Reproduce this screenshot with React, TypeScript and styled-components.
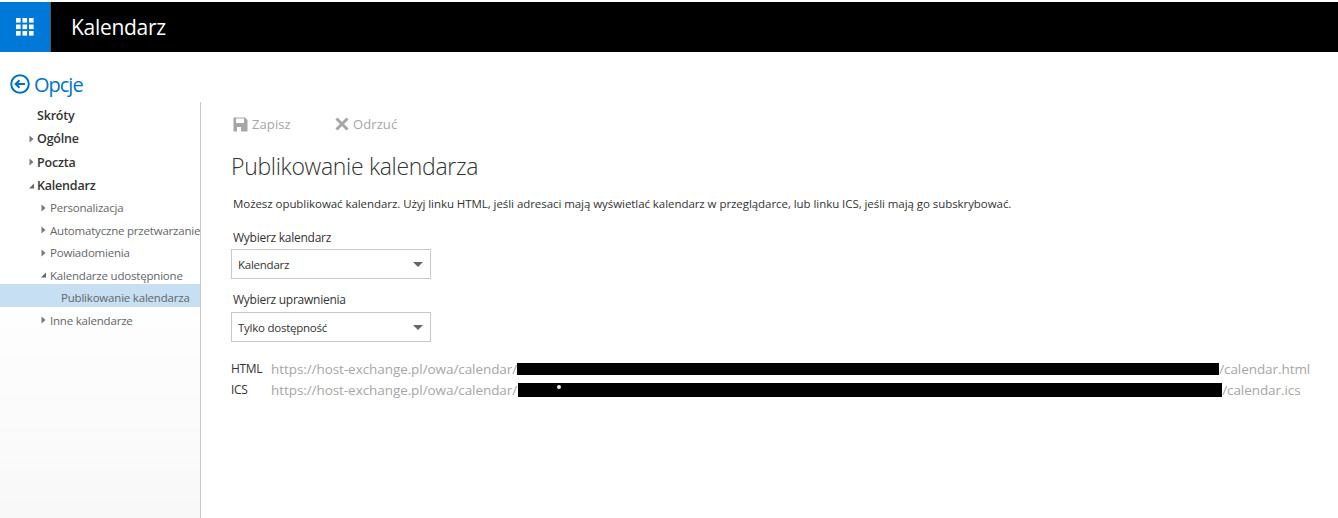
import React from "react";
import styled, { createGlobalStyle } from "styled-components";

const Global = createGlobalStyle`
  html, body { margin: 0; padding: 0; background: #fff; }
  body { font-family: "Open Sans", "Noto Sans", "Liberation Sans", sans-serif; overflow: hidden; }
`;

const Page = styled.div`
  width: 1338px; height: 518px; display: flex; flex-direction: column; overflow: hidden; background: #fff;
`;
const Header = styled.header`
  margin-top: 2px; height: 50px; flex: none; background: #000; display: flex; align-items: center;
`;
const Tile = styled.div`
  width: 50px; height: 50px; background: #0078d7; border-right: 1px solid #555; display: flex; align-items: center; justify-content: center;
`;
const AppTitle = styled.div`
  margin-left: 20px; color: #fff; font-size: 21px; letter-spacing: -0.3px; line-height: 50px;
`;
const BackRow = styled.div`
  height: 50px; flex: none; display: flex; align-items: center; padding: 14px 0 0 10px; gap: 4px; color: #0072c6;
  font-size: 20px; letter-spacing: -1px; box-sizing: border-box;
`;
const Body = styled.div`
  flex: 1; display: flex; min-height: 0;
`;
const Side = styled.nav`
  width: 200px; flex: none; box-sizing: content-box; border-right: 1px solid #c8c8c8; overflow: hidden;
  background: linear-gradient(#fff 40%, #f8f8f8 100%); padding-top: 2px;
`;
const TopItem = styled.div`
  height: 23.3px; display: flex; align-items: center; padding-left: 28px; font-size: 12.5px; font-weight: 600;
  color: #333; letter-spacing: -0.2px; white-space: nowrap;
`;
const SubList = styled.div`
  margin-top: -0.6px;
`;
const SubItem = styled.div`
  height: 22.5px; display: flex; align-items: center; padding-left: 40px; font-size: 11.5px;
  color: #666; letter-spacing: -0.2px; white-space: nowrap;
`;
const SelectedItem = styled(SubItem)`
  box-sizing: border-box; height: 23px; margin: -2.5px 0 2px; padding-top: 4px; background: #c7dff3;
`;
const TopArrow = styled.span`
  width: 9px; flex: none; display: flex; align-items: center;
`;
const SubArrow = styled.span`
  width: 10px; flex: none; display: flex; align-items: center;
`;
const SelectedIndent = styled.span`
  width: 21px; flex: none;
`;
const Main = styled.main`
  flex: 1; padding: 0 0 0 30px; min-width: 0;
`;
const Toolbar = styled.div`
  display: flex; align-items: center; height: 20px; margin-top: 12px; padding-left: 2px; color: #a6a6a6; font-size: 13px; letter-spacing: 0.1px;
`;
const ToolButton = styled.div<{ $w: number }>`
  display: flex; align-items: center; gap: 4px; width: ${p => p.$w}px;
`;
const Title = styled.h1`
  margin: 16px 0 0; font-size: 23px; font-weight: 300; color: #333; line-height: 32px; letter-spacing: -0.31px;
`;
const Intro = styled.p`
  margin: 14px 0 0 2px; font-size: 11.5px; line-height: 16px; color: #333; letter-spacing: -0.06px; white-space: nowrap;
`;
const Label = styled.div<{ $top: number }>`
  margin: ${p => p.$top}px 0 0 2px; font-size: 12px; line-height: 16px; color: #333; letter-spacing: -0.26px;
`;
const Select = styled.div<{ $top: number }>`
  margin-top: ${p => p.$top}px; width: 200px; height: 30px; box-sizing: border-box; border: 1px solid #c8c8c8; display: flex; align-items: center;
  justify-content: space-between; padding: 0 7px 0 6px; font-size: 11.5px; color: #333; letter-spacing: -0.25px;
`;
const Caret = styled.span`
  width: 0; height: 0; border-left: 5px solid transparent; border-right: 5px solid transparent; border-top: 5px solid #666;
`;
const Links = styled.div`
  margin-top: 16px; display: flex; flex-direction: column;
`;
const LinkRow = styled.div`
  display: flex; align-items: center; height: 21px; font-size: 13.5px; white-space: nowrap;
`;
const LinkLabel = styled.span`
  width: 40px; flex: none; color: #333; letter-spacing: -0.35px; font-size: 12px;
`;
const Url = styled.span`
  color: #a6a6a6; letter-spacing: -0.07px;
`;
const Redaction = styled.span<{ $w: number; $h: number; $gap: number }>`
  position: relative; display: inline-block; margin-left: ${p => p.$gap}px; width: ${p => p.$w}px; height: ${p => p.$h}px; background: #000; flex: none;
`;
const Speck = styled.span`
  position: absolute; left: 39px; top: 2px; width: 4px; height: 4px; border-radius: 50%; background: #eee;
`;

const ArrowIcon = ({ open }: { open?: boolean }) => (
  <svg width="7" height="8" viewBox="0 0 7 8">
    {open ? <path d="M1 6.5 L6 6.5 L6 1.5 Z" fill="#666" /> : <path d="M1.5 0.5 L5.5 4 L1.5 7.5 Z" fill="#777" />}
  </svg>
);

export default function App() {
  return (
    <Page>
      <Global />
      <Header>
        <Tile>
          <svg width="18" height="18" viewBox="0 0 18 18" fill="#fff">
            {[0, 6.5, 13].flatMap(y =>
              [0, 6.5, 13].map(x => <rect key={`${x}-${y}`} x={x} y={y} width="4.6" height="4.6" />)
            )}
          </svg>
        </Tile>
        <AppTitle>Kalendarz</AppTitle>
      </Header>
      <BackRow>
        <svg width="20" height="20" viewBox="0 0 20 20" fill="none" stroke="#0072c6">
          <circle cx="10" cy="10" r="8.8" strokeWidth="2" />
          <path d="M15 10 H6 M9.5 6.2 L5.6 10 L9.5 13.8" strokeWidth="2" />
        </svg>
        <span>Opcje</span>
      </BackRow>
      <Body>
        <Side>
          <TopItem><TopArrow />Skróty</TopItem>
          <TopItem><TopArrow><ArrowIcon /></TopArrow>Ogólne</TopItem>
          <TopItem><TopArrow><ArrowIcon /></TopArrow>Poczta</TopItem>
          <TopItem><TopArrow><ArrowIcon open /></TopArrow>Kalendarz</TopItem>
          <SubList>
            <SubItem><SubArrow><ArrowIcon /></SubArrow>Personalizacja</SubItem>
            <SubItem><SubArrow><ArrowIcon /></SubArrow>Automatyczne przetwarzanie</SubItem>
            <SubItem><SubArrow><ArrowIcon /></SubArrow>Powiadomienia</SubItem>
            <SubItem><SubArrow><ArrowIcon open /></SubArrow>Kalendarze udostępnione</SubItem>
            <SelectedItem><SelectedIndent />Publikowanie kalendarza</SelectedItem>
            <SubItem><SubArrow><ArrowIcon /></SubArrow>Inne kalendarze</SubItem>
          </SubList>
        </Side>
        <Main>
          <Toolbar>
            <ToolButton $w={102}>
              <svg width="15" height="15" viewBox="0 0 15 15" fill="#a6a6a6">
                <path d="M0.5 0.5 H12 L14.5 3 V14.5 H0.5 Z M3 1.5 V6 H11 V1.5 Z M4 10 V14.5 H8 V10 Z" fillRule="evenodd" />
              </svg>
              <span>Zapisz</span>
            </ToolButton>
            <ToolButton $w={80}>
              <svg width="14" height="14" viewBox="0 0 14 14" stroke="#a6a6a6" strokeWidth="3">
                <path d="M1.5 1.5 L12.5 12.5 M12.5 1.5 L1.5 12.5" />
              </svg>
              <span>Odrzuć</span>
            </ToolButton>
          </Toolbar>
          <Title>Publikowanie kalendarza</Title>
          <Intro>Możesz opublikować kalendarz. Użyj linku HTML, jeśli adresaci mają wyświetlać kalendarz w przeglądarce, lub linku ICS, jeśli mają go subskrybować.</Intro>
          <Label $top={18}>Wybierz kalendarz</Label>
          <Select $top={3}>Kalendarz<Caret /></Select>
          <Label $top={13}>Wybierz uprawnienia</Label>
          <Select $top={4}>Tylko dostępność<Caret /></Select>
          <Links>
            <LinkRow>
              <LinkLabel>HTML</LinkLabel>
              <Url>https://host-exchange.pl/owa/calendar/</Url>
              <Redaction $w={702} $h={12} $gap={0} />
              <Url>/calendar.html</Url>
            </LinkRow>
            <LinkRow>
              <LinkLabel>ICS</LinkLabel>
              <Url>https://host-exchange.pl/owa/calendar/</Url>
              <Redaction $w={704} $h={14} $gap={1}><Speck /></Redaction>
              <Url>/calendar.ics</Url>
            </LinkRow>
          </Links>
        </Main>
      </Body>
    </Page>
  );
}
